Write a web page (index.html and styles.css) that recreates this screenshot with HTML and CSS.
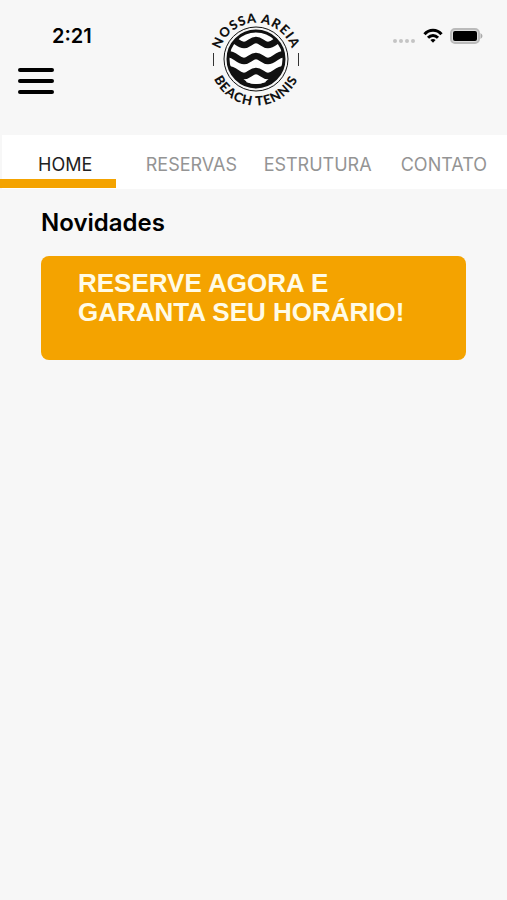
FILE: index.html
```html
<!DOCTYPE html>
<html lang="pt-BR">
<head>
  <meta charset="UTF-8">
  <meta name="viewport" content="width=device-width, initial-scale=1.0">
  <title>Nossa Areia Beach Tennis</title>
  <link rel="stylesheet" href="styles.css">
</head>
<body>
<header class="header">
  <div class="header-left">
    <span class="clock">2:21</span>
    <button type="button" class="menu-button" aria-label="Menu">
      <span class="menu-line"></span>
      <span class="menu-line"></span>
      <span class="menu-line"></span>
    </button>
  </div>

  <svg class="logo" viewBox="0 0 100 100" role="img" aria-label="Nossa Areia Beach Tennis">
    <defs>
      <path id="arc-top" d="M13.5 60 A37.5 37.5 0 1 1 86.5 60"/>
      <path id="arc-bottom" d="M6 35 A46.5 46.5 0 1 0 94 35"/>
      <clipPath id="disc"><circle cx="50" cy="50" r="28"/></clipPath>
    </defs>
    <circle cx="50" cy="50" r="32" fill="none" stroke="#111" stroke-width="1"/>
    <circle cx="50" cy="50" r="28" fill="#fff" stroke="#111" stroke-width="3"/>
    <g clip-path="url(#disc)" fill="none" stroke="#111" stroke-width="6.5">
      <path d="M20 29 C29 28 31 36 38 36 C43 36 45 31 50 31 C55 31 57 36 62 36 C69 36 71 28 80 29"/>
      <path d="M20 45 C29 44 31 52 38 52 C43 52 45 47 50 47 C55 47 57 52 62 52 C69 52 71 44 80 45"/>
      <path d="M20 60 C29 59 31 67 38 67 C43 67 45 62 50 62 C55 62 57 67 62 67 C69 67 71 59 80 60"/>
      <path d="M22 62 L35 68 L41 73 Q50 77 59 73 L65 68 L78 62 V82 H22 Z" fill="#111" stroke="none"/>
      <path d="M40 73 Q45 68 50 68 Q55 68 60 73 Q50 77 40 73 Z" fill="#fff" stroke="none"/>
    </g>
    <path d="M7.5 44 V57 M92.5 44 V57" stroke="#333" stroke-width="1"/>
    <text class="logo-text"><textPath href="#arc-top" startOffset="50%">NOSSA AREIA</textPath></text>
    <text class="logo-text"><textPath href="#arc-bottom" startOffset="50%">BEACH TENNIS</textPath></text>
  </svg>

  <div class="status-icons">
    <svg width="24" height="16" viewBox="0 0 24 16" fill="#c4c4c4" aria-hidden="true">
      <circle cx="3" cy="13" r="2"/>
      <circle cx="9" cy="13" r="2"/>
      <circle cx="15" cy="13" r="2"/>
      <circle cx="21" cy="13" r="2"/>
    </svg>
    <svg width="20" height="16" viewBox="0 0 20 16" fill="none" stroke="#000" stroke-width="3" aria-hidden="true">
      <path d="M1.5 6.2 C6 0.9 14 0.9 18.5 6.2"/>
      <path d="M5 9.8 C8 6.7 12 6.7 15 9.8"/>
      <path d="M7.4 12 Q10 9.8 12.6 12 L10 14.8 Z" fill="#000" stroke="none"/>
    </svg>
    <svg width="33" height="16" viewBox="0 0 33 16" aria-hidden="true">
      <rect x="1" y="1" width="28" height="14" rx="4" fill="#ddd" stroke="#bbb" stroke-width="2"/>
      <rect x="3" y="3" width="24" height="10" rx="2"/>
      <path d="M30.5 5 Q34.5 8 30.5 11 Z" fill="#aaa"/>
    </svg>
  </div>
</header>

<nav class="tabs">
  <a href="#home" class="tab active">HOME</a>
  <a href="#reservas" class="tab">RESERVAS</a>
  <a href="#estrutura" class="tab">ESTRUTURA</a>
  <a href="#contato" class="tab">CONTATO</a>
</nav>

<main class="content">
  <h1>Novidades</h1>
  <a href="#reservas" class="banner">RESERVE AGORA E<br>GARANTA SEU HORÁRIO!</a>
</main>
</body>
</html>
```
FILE: styles.css
```css
* {
  box-sizing: border-box;
}

body {
  margin: 0;
  min-height: 100vh;
  background: #f7f7f7;
  color: #000;
  font-family: Inter, "Liberation Sans", sans-serif;
}

.header {
  display: grid;
  grid-template-columns: 1fr 100px 1fr;
  padding: 9px 13px 26px 18px;
}

.header-left {
  display: flex;
  flex-direction: column;
  align-items: flex-start;
  gap: 20px;
  padding-top: 15px;
}

.clock {
  padding-left: 34px;
  font-size: 20px;
  line-height: 24px;
  font-weight: 600;
}

.menu-button {
  display: flex;
  flex-direction: column;
  gap: 7px;
  width: 36px;
  padding: 0;
  border: none;
  background: none;
  cursor: pointer;
}

.menu-line {
  width: 100%;
  height: 4px;
  border-radius: 2px;
  background: #000;
}

.logo {
  width: 100px;
  height: 100px;
}

.logo-text {
  font-family: Lato, sans-serif;
  font-size: 13px;
  font-weight: 900;
  letter-spacing: 1px;
  text-anchor: middle;
  fill: #111;
}

.status-icons {
  display: flex;
  justify-content: flex-end;
  align-items: center;
  gap: 7px;
  height: 16px;
  margin-top: 19px;
  padding-right: 11px;
}

.tabs {
  position: relative;
  display: grid;
  grid-template-columns: repeat(4, 1fr);
  margin-left: 2px;
  background: #fff;
}

/* orange marker under the current tab */
.tabs::after {
  content: "";
  position: absolute;
  left: -2px;
  bottom: 1px;
  width: 23%;
  height: 9px;
  background: #f4a300;
}

.tab {
  padding: 18px 0 12px;
  color: #949494;
  font-size: 18px;
  line-height: 24px;
  text-align: center;
  text-decoration: none;
}

.tab.active {
  color: #222;
}

.content {
  padding: 18px 41px;
}

h1 {
  margin: 0 0 17px;
  font-size: 24px;
  line-height: 32px;
  font-weight: 600;
}

.banner {
  display: block;
  padding: 13px 37px 33px;
  border-radius: 8px;
  background: #f4a300;
  color: #fffbe6;
  font-family: "Liberation Sans", Arial, sans-serif;
  font-size: 26px;
  line-height: 29px;
  font-weight: bold;
  text-decoration: none;
}
```
